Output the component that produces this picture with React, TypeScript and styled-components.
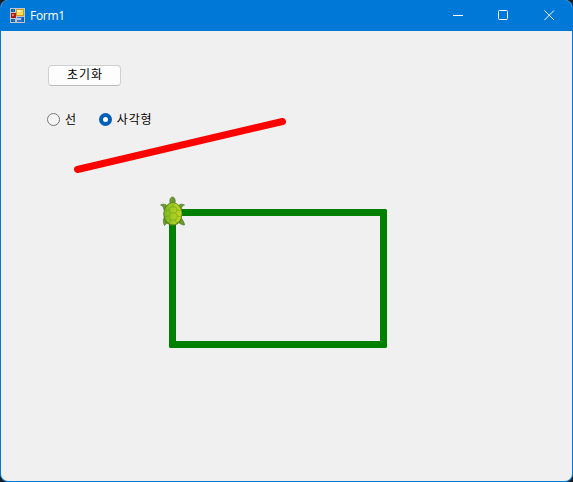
import React, { useState } from "react";
import styled, { createGlobalStyle } from "styled-components";

const GlobalStyle = createGlobalStyle`
  * { box-sizing: border-box; }
  body { margin: 0; background: #1b1e22; overflow: hidden; }
`;

const Window = styled.div`
  width: 573px;
  height: 482px;
  display: flex;
  flex-direction: column;
  overflow: hidden;
  border: 1px solid #0078d7;
  border-top: 0;
  border-radius: 8px;
  background: #f0f0f0;
  color: #000;
  font: 12px "Noto Sans CJK KR", sans-serif;
`;

const TitleBar = styled.header`
  flex: none;
  height: 31px;
  display: flex;
  align-items: center;
  padding-left: 9px;
  background: #0078d7;
  color: #fff;
`;

const Title = styled.span`
  flex: 1;
  padding: 1px 0 0 5px;
  font: 12px/16px "Open Sans", sans-serif;
  letter-spacing: -0.3px;
`;

const CaptionButton = styled.button`
  width: 45.5px;
  height: 31px;
  display: flex;
  align-items: center;
  justify-content: center;
  padding: 0;
  border: 0;
  background: none;
  color: #fff;
`;

const Client = styled.main`
  position: relative;
  flex: 1;
  display: flex;
  flex-direction: column;
  align-items: flex-start;
  padding: 34px 0 0 46px;
`;

const PushButton = styled.button`
  width: 73px;
  height: 21px;
  margin-left: 1px;
  padding: 0 0 3px 1px;
  border: 1px solid #d0d0d0;
  border-bottom-color: #bcbcbc;
  border-radius: 4px;
  background: #fdfdfd;
  color: #000;
  font: 12px/16px "Noto Sans CJK KR", sans-serif;
  letter-spacing: 1px;
`;

const RadioGroup = styled.div`
  display: flex;
  gap: 22px;
  margin-top: 25px;
`;

const RadioLabel = styled.label`
  display: flex;
  align-items: center;
  gap: 5px;
  height: 17px;
  line-height: 16px;
  letter-spacing: 0.8px;
`;

const RadioInput = styled.input`
  appearance: none;
  width: 13px;
  height: 13px;
  margin: 0;
  border: 1px solid #767676;
  border-radius: 50%;
  background: #f5f5f5;
  &:checked {
    border: 4px solid #005fb8;
    background: #fff;
  }
`;

const RadioText = styled.span`
  padding-bottom: 1px;
`;

const Canvas = styled.svg`
  position: absolute;
  left: -1px;
  top: 0;
  width: 573px;
  height: 450px;
  pointer-events: none;
`;

function AppIcon() {
  return (
    <svg width="15" height="15" viewBox="0 0 15 15" shapeRendering="crispEdges">
      <path fill="#c3c5c8" d="M0 0h15v15H0z" />
      <path fill="#0865bd" d="M1 1h4v3H1zM1 11h4v3H1zM12 9h2v5h-2z" />
      <path fill="#2c73ba" d="M3 1h1v3H3zM3 11h1v3H3z" />
      <path fill="#a81c18" d="M1 5h5v5H1z" />
      <path fill="#ee7660" d="M2 6h2v2H2z" />
      <path fill="#d49a16" d="M6 1h8v7H6z" />
      <path fill="#ffdc59" d="M7 2h6v5H7z" />
      <path fill="#fff2ae" d="M7 2h4v2H7z" />
      <path fill="#3972cf" d="M7 9h5v5H7z" />
      <path fill="#a9c7ff" d="M7 10h4v2H7z" />
    </svg>
  );
}

function Turtle() {
  return (
    <g transform="translate(160 196)">
      <g fill="#6b9a30" stroke="#3f6b22" strokeWidth=".6">
        <path d="M10.500 9C9 5 10 1 12.500 1S16 5 14.500 9z" />
        <path d="M7 10C6 7.500 2 8 .5 9c1.500.3 3 1.500 3.500 5z" />
        <path d="M18.500 10c1-2.500 4.500-2 6-1-1.500.3-3 1.500-3.500 5z" />
        <path d="M4 22c-1 2-1 4 .5 7.500 1-.5 1.500-2 3.500-3z" />
        <path d="M21 22c2 2 3.500 5 3.500 7-2 .3-4-1-6.500-3z" />
      </g>
      <ellipse cx="12.800" cy="18" rx="9.600" ry="11.500" fill="#587f18" />
      <ellipse cx="12.900" cy="17.700" rx="8.700" ry="10.700" fill="url(#shell)" />
      <g fill="none" stroke="#67961a" strokeWidth=".8" opacity=".65">
        <path d="M10.500 11h5l2 3-2 3h-5l-2-3zM10.500 17l-2 3 2 4h5l2-4-2-3M13 8v3M8.500 14l-4 1M17.500 14l4 1M8.500 20l-4 1M17.500 20l4 1M10.500 24l-1 3M15.500 24l1 3" />
      </g>
    </g>
  );
}

function Drawing() {
  return (
    <Canvas viewBox="0 31 573 450">
      <defs>
        <linearGradient id="shell">
          <stop offset="0" stopColor="#78b522" />
          <stop offset=".5" stopColor="#a3cd24" />
          <stop offset="1" stopColor="#c3d420" />
        </linearGradient>
      </defs>
      <path d="M77.500 169.500L282.500 121.500" stroke="#f00" strokeWidth="7" strokeLinecap="round" />
      <rect
        x="172.500" y="212.500" width="211" height="132"
        fill="none" stroke="#008000" strokeWidth="7" strokeLinejoin="bevel"
      />
      <path d="M380 213v-4h6l1 1v3zM380 344h7v3l-1 1h-6zM169 344h7v4h-6l-1-1z" fill="#008000" />
      <Turtle />
    </Canvas>
  );
}

export default function App() {
  const [shape, setShape] = useState("rect");
  return (
    <>
      <GlobalStyle />
      <Window>
        <TitleBar>
          <AppIcon />
          <Title>Form1</Title>
          <CaptionButton aria-label="Minimize">
            <svg width="11" height="11"><path d="M0 5.500h10" stroke="currentColor" /></svg>
          </CaptionButton>
          <CaptionButton aria-label="Maximize">
            <svg width="11" height="11"><rect x=".5" y=".5" width="9" height="9" rx="1" fill="none" stroke="currentColor" /></svg>
          </CaptionButton>
          <CaptionButton aria-label="Close">
            <svg width="11" height="11"><path d="M.5 .5l9.500 9.500M10 .5L.5 10" stroke="currentColor" /></svg>
          </CaptionButton>
        </TitleBar>
        <Client>
          <PushButton>초기화</PushButton>
          <RadioGroup>
            <RadioLabel>
              <RadioInput type="radio" name="shape" checked={shape === "line"} onChange={() => setShape("line")} />
              <RadioText>선</RadioText>
            </RadioLabel>
            <RadioLabel>
              <RadioInput type="radio" name="shape" checked={shape === "rect"} onChange={() => setShape("rect")} />
              <RadioText>사각형</RadioText>
            </RadioLabel>
          </RadioGroup>
          <Drawing />
        </Client>
      </Window>
    </>
  );
}
